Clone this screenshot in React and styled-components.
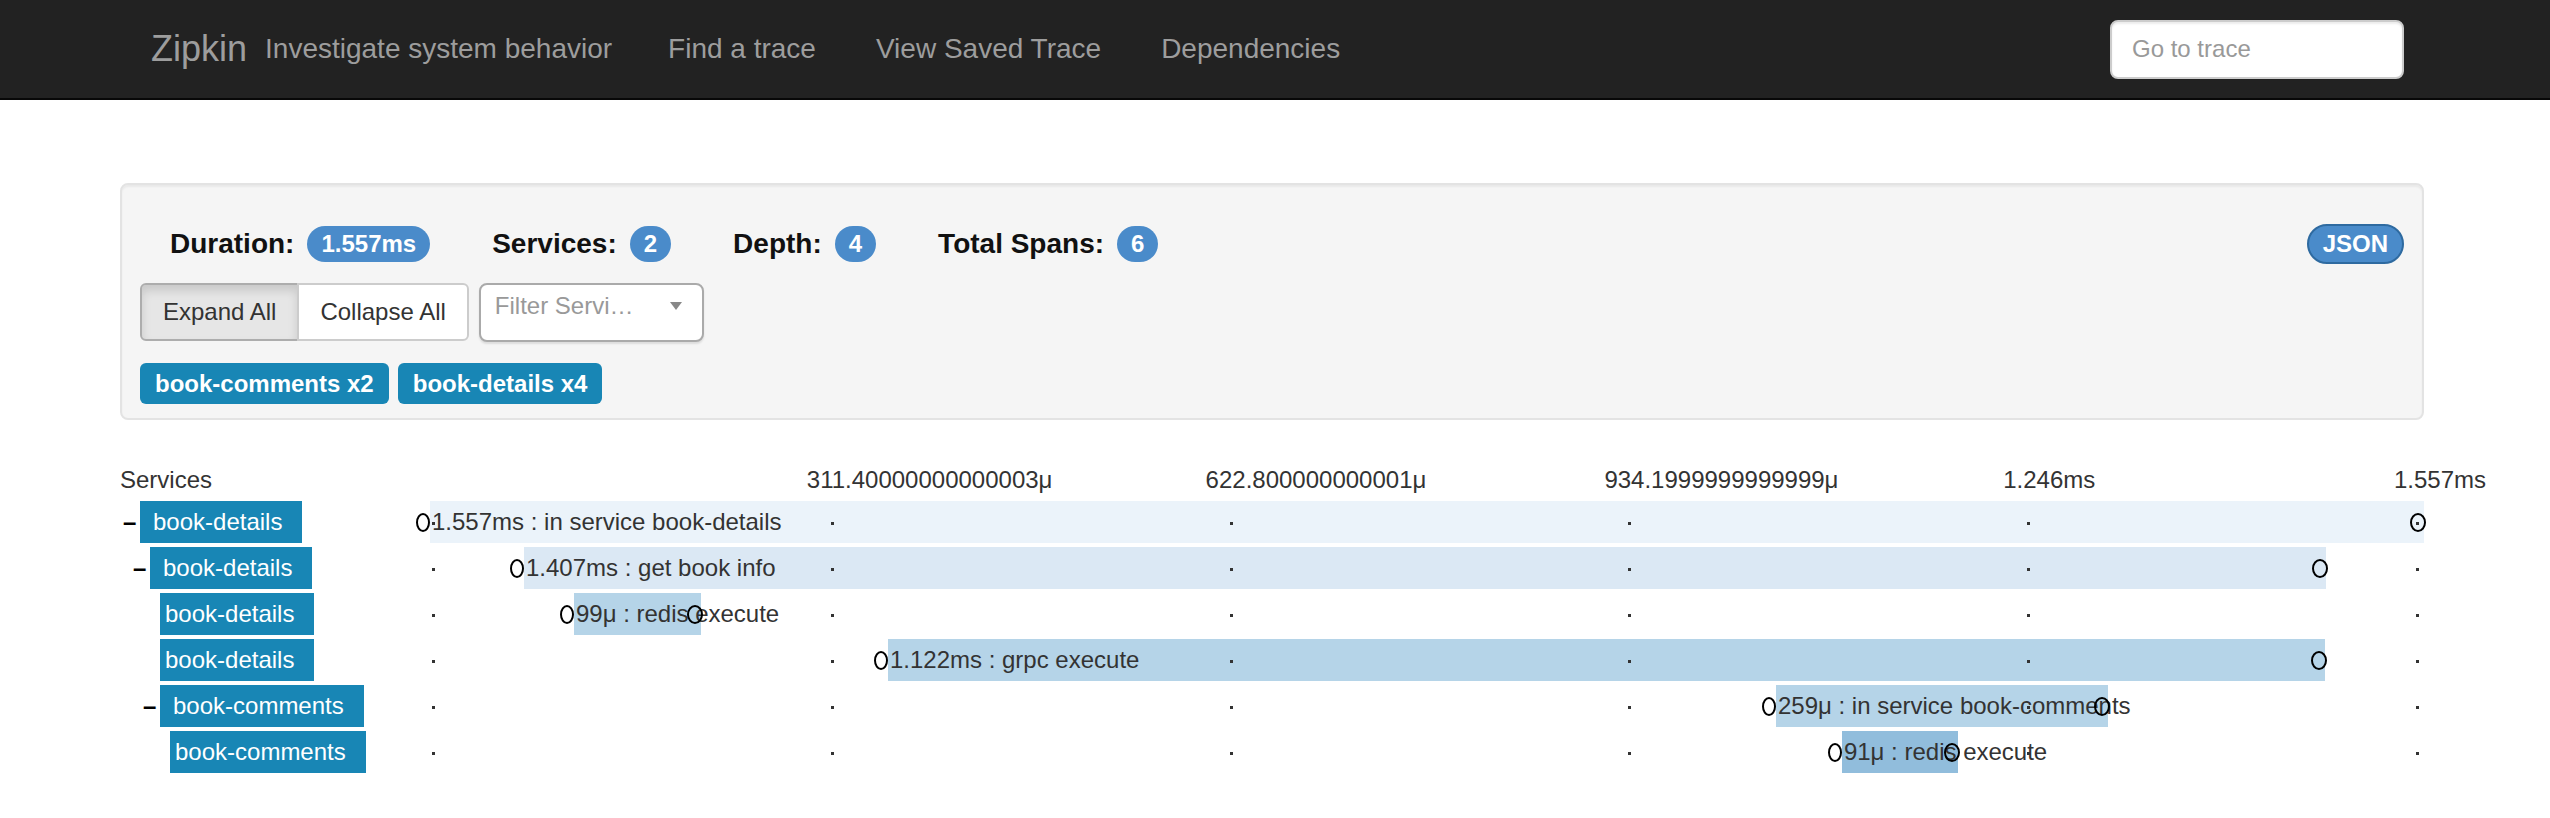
import React from 'react';
import styled, { createGlobalStyle } from 'styled-components';

const GlobalStyle = createGlobalStyle`
  * { box-sizing: border-box; }
  body {
    margin: 0;
    background: #fff;
    color: #333;
    font-family: "Liberation Sans", Arial, Helvetica, sans-serif;
  }
`;

const TIMELINE_WIDTH = 1994;
const TOTAL = 1557;

const spans = [
  { service: 'book-details', depth: 0, parent: true, start: 0, dur: 1557, color: '#ebf3fa', label: '1.557ms : in service book-details' },
  { service: 'book-details', depth: 1, parent: true, start: 73.4, dur: 1407, color: '#dbe8f4', label: '1.407ms : get book info' },
  { service: 'book-details', depth: 2, parent: false, start: 112.4, dur: 99, color: '#b5d4e8', label: '99μ : redis execute' },
  { service: 'book-details', depth: 2, parent: false, start: 357.6, dur: 1122, color: '#b5d4e8', label: '1.122ms : grpc execute' },
  { service: 'book-comments', depth: 2, parent: true, start: 1051, dur: 259, color: '#b5d4e8', label: '259μ : in service book-comments' },
  { service: 'book-comments', depth: 3, parent: false, start: 1102.5, dur: 91, color: '#91bddc', label: '91μ : redis execute' },
];

const ticks = ['', '311.40000000000003μ', '622.800000000001μ', '934.1999999999999μ', '1.246ms', '1.557ms'];
const tickStep = 398.8;

const Navbar = styled.nav`
  background: #222;
  border-bottom: 2px solid #080808;
  height: 100px;
  display: flex;
`;

const NavInner = styled.div`
  width: 2304px;
  margin-left: 120px;
  display: flex;
  align-items: center;
`;

const Brand = styled.a`
  padding-left: 31px;
  font-size: 36px;
  line-height: 1;
  color: #9d9d9d;
`;

const Tagline = styled.span`
  margin-left: 18px;
  font-size: 28px;
  color: #9d9d9d;
`;

const NavList = styled.ul`
  display: flex;
  list-style: none;
  margin: 0 0 0 26px;
  padding: 0;
  li {
    padding: 0 30px;
    font-size: 28px;
    color: #9d9d9d;
    white-space: nowrap;
  }
`;

const SearchInput = styled.input`
  margin-left: auto;
  margin-right: 20px;
  width: 294px;
  height: 59px;
  padding: 0 20px;
  border: 2px solid #ccc;
  border-radius: 8px;
  background: #fff;
  font-family: inherit;
  font-size: 24px;
  color: #555;
  box-shadow: inset 0 2px 2px rgba(0, 0, 0, 0.075);
  outline: none;
  &::placeholder {
    color: #999;
  }
`;

const Container = styled.main`
  width: 2304px;
  margin-left: 120px;
`;

const Well = styled.section`
  margin-top: 83px;
  padding: 39px 18px 14px;
  background: #f5f5f5;
  border: 2px solid #e3e3e3;
  border-radius: 8px;
  box-shadow: inset 0 2px 2px rgba(0, 0, 0, 0.05);
`;

const StatsRow = styled.div`
  height: 40px;
  display: flex;
  align-items: center;
  justify-content: space-between;
`;

const Stats = styled.div`
  margin-left: 30px;
  display: flex;
  align-items: center;
  gap: 62px;
`;

const Stat = styled.div`
  display: flex;
  align-items: center;
  gap: 13px;
  strong {
    font-size: 28px;
    color: #111;
  }
`;

const Badge = styled.span`
  display: inline-block;
  min-width: 38px;
  padding: 6px 14px;
  border-radius: 20px;
  background: #4a8bca;
  color: #fff;
  font-size: 24px;
  font-weight: bold;
  line-height: 24px;
  text-align: center;
`;

const JsonButton = styled.button`
  height: 40px;
  padding: 0 14px;
  border: 2px solid #2e6aa0;
  border-radius: 20px;
  background: #4a8bca;
  color: #fff;
  font-family: inherit;
  font-size: 24px;
  font-weight: bold;
`;

const ControlsRow = styled.div`
  margin-top: 19px;
  display: flex;
  align-items: flex-start;
`;

const ButtonGroup = styled.div`
  display: flex;
`;

const GroupButton = styled.button`
  height: 58px;
  padding: 0 21px;
  font-family: inherit;
  font-size: 24px;
  color: #333;
  border: 2px solid ${(p) => (p.$active ? '#adadad' : '#ccc')};
  background: ${(p) => (p.$active ? '#e6e6e6' : '#fff')};
  box-shadow: ${(p) => (p.$active ? 'inset 0 6px 10px rgba(0,0,0,0.125)' : 'none')};
  border-radius: 0;
  &:first-child {
    border-radius: 6px 0 0 6px;
  }
  &:last-child {
    margin-left: -2px;
    border-radius: 0 6px 6px 0;
  }
`;

const FilterSelect = styled.div`
  margin-left: 10px;
  width: 225px;
  height: 59px;
  padding: 6px 20px 0 14px;
  display: flex;
  justify-content: space-between;
  background: #fff;
  border: 2px solid #aaa;
  border-radius: 8px;
  box-shadow: 0 2px 2px rgba(0, 0, 0, 0.1);
  color: #999;
  font-size: 24px;
  line-height: 30px;
  white-space: nowrap;
  svg {
    margin-top: 11px;
  }
`;

const TagsRow = styled.div`
  margin-top: 21px;
  display: flex;
  gap: 9px;
`;

const ServiceTag = styled.span`
  height: 41px;
  padding: 0 15px;
  border-radius: 6px;
  background: #1886b5;
  color: #fff;
  font-size: 24px;
  font-weight: bold;
  line-height: 41px;
`;

const Trace = styled.section`
  margin-top: 43px;
`;

const HeaderRow = styled.div`
  height: 34px;
  margin-bottom: 4px;
  display: flex;
  font-size: 24px;
  line-height: 34px;
`;

const SpanRow = styled.div`
  height: 42px;
  margin-bottom: 4px;
  display: flex;
`;

const ServiceCell = styled.div`
  width: 310px;
  flex-shrink: 0;
  display: flex;
  align-items: stretch;
  padding-left: ${(p) => 3 + p.$depth * 10}px;
`;

const Toggle = styled.span`
  width: 17px;
  font-size: 24px;
  font-weight: bold;
  line-height: 42px;
  color: #000;
`;

const ServiceName = styled.span`
  padding: 0 20px 0 ${(p) => (p.$parent ? 13 : 5)}px;
  background: #1886b5;
  color: #fff;
  font-size: 24px;
  line-height: 42px;
  white-space: nowrap;
`;

const TimelineCell = styled.div`
  position: relative;
  width: ${TIMELINE_WIDTH}px;
  flex-shrink: 0;
`;

const TickLabel = styled.span`
  position: absolute;
  top: 0;
  white-space: nowrap;
  color: #333;
`;

const Bar = styled.div`
  position: absolute;
  top: 0;
  bottom: 0;
  background: ${(p) => p.$color};
`;

const Dot = styled.span`
  position: absolute;
  top: 21px;
  width: 3px;
  height: 3px;
  background: #333;
`;

const SpanLabel = styled.span`
  position: absolute;
  top: 0;
  margin-left: 2px;
  font-size: 24px;
  line-height: 42px;
  color: #333;
  white-space: nowrap;
`;

const Annotation = styled.span`
  position: absolute;
  top: 12px;
  width: ${(p) => (p.$end ? 16 : 14)}px;
  height: 19px;
  margin-left: -14px;
  border: 2px solid #000;
  border-radius: 50%;
`;

const pct = (v) => `${(v / TOTAL) * 100}%`;
const dotLeft = (i) => (i === 5 ? 1986 : 2 + i * tickStep);
const labelLeft = (i) => (i === 5 ? 1964 : -22 + i * tickStep);

function SpanLine({ span }) {
  return (
    <SpanRow>
      <ServiceCell $depth={span.depth}>
        <Toggle>{span.parent ? '–' : ''}</Toggle>
        <ServiceName $parent={span.parent}>{span.service}</ServiceName>
      </ServiceCell>
      <TimelineCell>
        <Bar $color={span.color} style={{ left: pct(span.start), width: pct(span.dur) }} />
        {ticks.map((_, i) => (
          <Dot key={i} style={{ left: dotLeft(i) }} />
        ))}
        <SpanLabel style={{ left: pct(span.start) }}>{span.label}</SpanLabel>
        <Annotation style={{ left: pct(span.start) }} />
        <Annotation $end style={{ left: pct(span.start + span.dur) }} />
      </TimelineCell>
    </SpanRow>
  );
}

export default function App() {
  return (
    <>
      <GlobalStyle />
      <Navbar>
        <NavInner>
          <Brand>Zipkin</Brand>
          <Tagline>Investigate system behavior</Tagline>
          <NavList>
            <li>Find a trace</li>
            <li>View Saved Trace</li>
            <li>Dependencies</li>
          </NavList>
          <SearchInput placeholder="Go to trace" />
        </NavInner>
      </Navbar>
      <Container>
        <Well>
          <StatsRow>
            <Stats>
              <Stat>
                <strong>Duration:</strong>
                <Badge>1.557ms</Badge>
              </Stat>
              <Stat>
                <strong>Services:</strong>
                <Badge>2</Badge>
              </Stat>
              <Stat>
                <strong>Depth:</strong>
                <Badge>4</Badge>
              </Stat>
              <Stat>
                <strong>Total Spans:</strong>
                <Badge>6</Badge>
              </Stat>
            </Stats>
            <JsonButton>JSON</JsonButton>
          </StatsRow>
          <ControlsRow>
            <ButtonGroup>
              <GroupButton $active>Expand All</GroupButton>
              <GroupButton>Collapse All</GroupButton>
            </ButtonGroup>
            <FilterSelect>
              <span>Filter Servi…</span>
              <svg width="12" height="8" viewBox="0 0 12 8">
                <path d="M0 0h12L6 8z" fill="#888" />
              </svg>
            </FilterSelect>
          </ControlsRow>
          <TagsRow>
            <ServiceTag>book-comments x2</ServiceTag>
            <ServiceTag>book-details x4</ServiceTag>
          </TagsRow>
        </Well>
        <Trace>
          <HeaderRow>
            <ServiceCell $depth={-0.3}>Services</ServiceCell>
            <TimelineCell>
              {ticks.map((t, i) =>
                t ? (
                  <TickLabel key={i} style={{ left: labelLeft(i) }}>
                    {t}
                  </TickLabel>
                ) : null
              )}
            </TimelineCell>
          </HeaderRow>
          {spans.map((s, i) => (
            <SpanLine key={i} span={s} />
          ))}
        </Trace>
      </Container>
    </>
  );
}
